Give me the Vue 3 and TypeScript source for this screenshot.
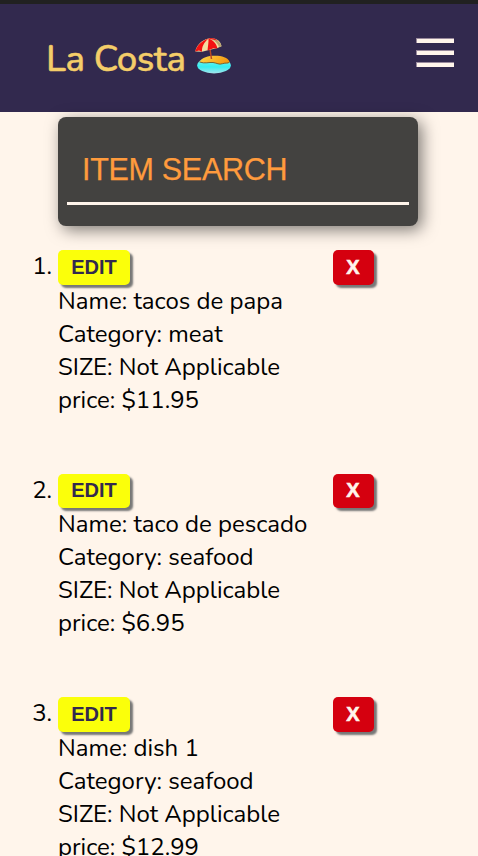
<script setup lang="ts">
interface MenuItem {
  id: number
  name: string
  category: string
  size: string
  price: string
}

const items: MenuItem[] = [
  { id: 1, name: 'tacos de papa', category: 'meat', size: 'Not Applicable', price: '11.95' },
  { id: 2, name: 'taco de pescado', category: 'seafood', size: 'Not Applicable', price: '6.95' },
  { id: 3, name: 'dish 1', category: 'seafood', size: 'Not Applicable', price: '12.99' },
]
</script>

<template>
  <div class="page">
    <header class="header">
      <h1 class="brand">
        <span class="brand-name">La Costa</span>
        <svg class="beach" viewBox="0 0 38 38" aria-hidden="true">
          <defs>
            <linearGradient id="sand" x1="0" y1="0" x2="1" y2="0.3">
              <stop offset="0" stop-color="#ffd94a" />
              <stop offset="1" stop-color="#f59a12" />
            </linearGradient>
            <linearGradient id="sea" x1="0" y1="0" x2="0" y2="1">
              <stop offset="0" stop-color="#8ff5ee" />
              <stop offset="0.6" stop-color="#35eef2" />
              <stop offset="1" stop-color="#a5e3ea" />
            </linearGradient>
          </defs>
          <ellipse cx="19" cy="28.200" rx="16.800" ry="8.200" fill="url(#sea)" />
          <path d="M4.500 25C7 20.500 13 18.800 20 18.800S33 20.500 34.500 24.800C34 27 31 26 27.500 26.700C24 28 21.500 26 18 25.500C14 25 10 27 4.500 25Z" fill="url(#sand)" />
          <path d="M4.500 25C10 27 14 25 18 25.500S24 28 27.500 26.700S33 27 34.500 24.800" fill="none" stroke="#604b28" stroke-width="0.800" />
          <path d="M14.800 11L16.500 22" stroke="#b94727" stroke-width="1.500" />
          <path d="M0.300 14.500C1.500 8.500 6 3.200 13.500 1.500C20.500 .5 25.500 3.200 26.500 9.200L22.500 11L15 12.700L7 14.700Z" fill="#f4dda0" />
          <path d="M0.300 14.500C1.500 9 6.500 3.700 13.500 1.500C8.700 5.700 6.700 10 7 14.700L4 13.500Z" fill="#f41212" />
          <path d="M13.500 1.500C18 3 21.500 6.500 22.500 11.400L18.500 11.300L12.500 13.500C13 9 13.700 5 13.500 1.500Z" fill="#f41212" />
          <path d="M13.500 1.500C17.500 .4 20.500 1.500 23 4C20 3.500 16.500 2.300 13.500 1.500Z" fill="#e12322" />
          <path d="M23 4C25 5.500 26.200 7.500 26.500 9.200L24 10C23 7 20.500 4 17.500 2.700Z" fill="#b9a46f" />
        </svg>
      </h1>
      <button class="menu" aria-label="Menu">
        <span class="bar"></span>
        <span class="bar"></span>
        <span class="bar"></span>
      </button>
    </header>
    <main>
      <form class="search" @submit.prevent>
        <input class="search-input" type="text" placeholder="ITEM SEARCH" />
      </form>
      <ol class="items">
        <li v-for="item in items" :key="item.id" class="item">
          <span class="number">{{ item.id }}.</span>
          <div class="actions">
            <button class="btn edit">EDIT</button>
            <button class="btn remove">X</button>
          </div>
          <div class="details">
            <div class="name">Name: {{ item.name }}</div>
            <div class="category">Category: {{ item.category }}</div>
            <div class="size">SIZE: {{ item.size }}</div>
            <div class="price">price: ${{ item.price }}</div>
          </div>
        </li>
      </ol>
    </main>
  </div>
</template>

<style>
body {
  background: #fff5eb;
}
</style>

<style scoped>
.page {
  height: 856px;
  overflow: hidden;
  background: #fff5eb;
  color: #000;
  font-family: Nunito, Lato, sans-serif;
  font-size: 24px;
}

.header {
  box-sizing: border-box;
  height: 112px;
  padding: 0 24px 0 46px;
  border-top: 4px solid #212121;
  background: #32294e;
  display: flex;
  justify-content: space-between;
}

.brand {
  margin: 33px 0 0;
  height: 38px;
  display: flex;
  gap: 9px;
  color: #f4cd69;
  font-size: 36.5px;
  font-weight: 500;
  letter-spacing: -0.4px;
  line-height: 44px;
  -webkit-text-stroke: 0.5px #f4cd69;
}

.brand-name {
  width: 140px;
  white-space: nowrap;
}

.beach {
  width: 38px;
  height: 38px;
}

.menu {
  width: 38px;
  height: 29px;
  margin-top: 34px;
  padding: 0;
  border: 0;
  background: none;
  display: flex;
  flex-direction: column;
  justify-content: space-between;
}

.bar {
  box-sizing: border-box;
  width: 38px;
  height: 5px;
  border-top: 1px solid #98899c;
  border-left: 1px solid #98899c;
  background: #fff5eb;
}

.search {
  box-sizing: border-box;
  width: 360px;
  height: 109.5px;
  margin: 4.5px 0 0 58px;
  padding: 20.5px 9px 20px;
  border-radius: 8px;
  background: #434240;
  box-shadow: 4px 4px 16px rgba(0, 0, 0, 0.5);
}

.search-input {
  box-sizing: border-box;
  display: block;
  width: 342px;
  height: 68px;
  padding: 0 15px;
  border: 0;
  border-bottom: 3px solid #fff5eb;
  outline: 0;
  background: transparent;
  color: #ff9b3d;
  font: 30.5px "Liberation Sans", sans-serif;
  letter-spacing: -0.3px;
}

.search-input::placeholder {
  color: #ff9b3d;
  opacity: 1;
  -webkit-text-stroke: 0.25px #ff9b3d;
}

.items {
  margin: 24px 0 0;
  padding: 0;
  list-style: none;
}

.item {
  display: grid;
  grid-template-columns: 52px 317px;
  column-gap: 6px;
  margin-bottom: 57px;
}

.number {
  text-align: right;
  line-height: 33px;
}

.actions {
  display: flex;
  justify-content: space-between;
  height: 34.500px;
}

.btn {
  height: 34.500px;
  padding: 0;
  border: 0;
  border-radius: 5px;
  box-shadow: 3px 3px 2px #777;
  font: bold 20px "Liberation Sans", sans-serif;
}

.edit {
  width: 72px;
  background: #fbff0a;
  color: #32294e;
}

.remove {
  width: 41px;
  margin-right: 1.500px;
  background: #d5000f;
  color: #fff5eb;
  -webkit-text-stroke: 0.6px #fff5eb;
}

.details {
  grid-column: 2;
  line-height: 33px;
  white-space: nowrap;
}
</style>
